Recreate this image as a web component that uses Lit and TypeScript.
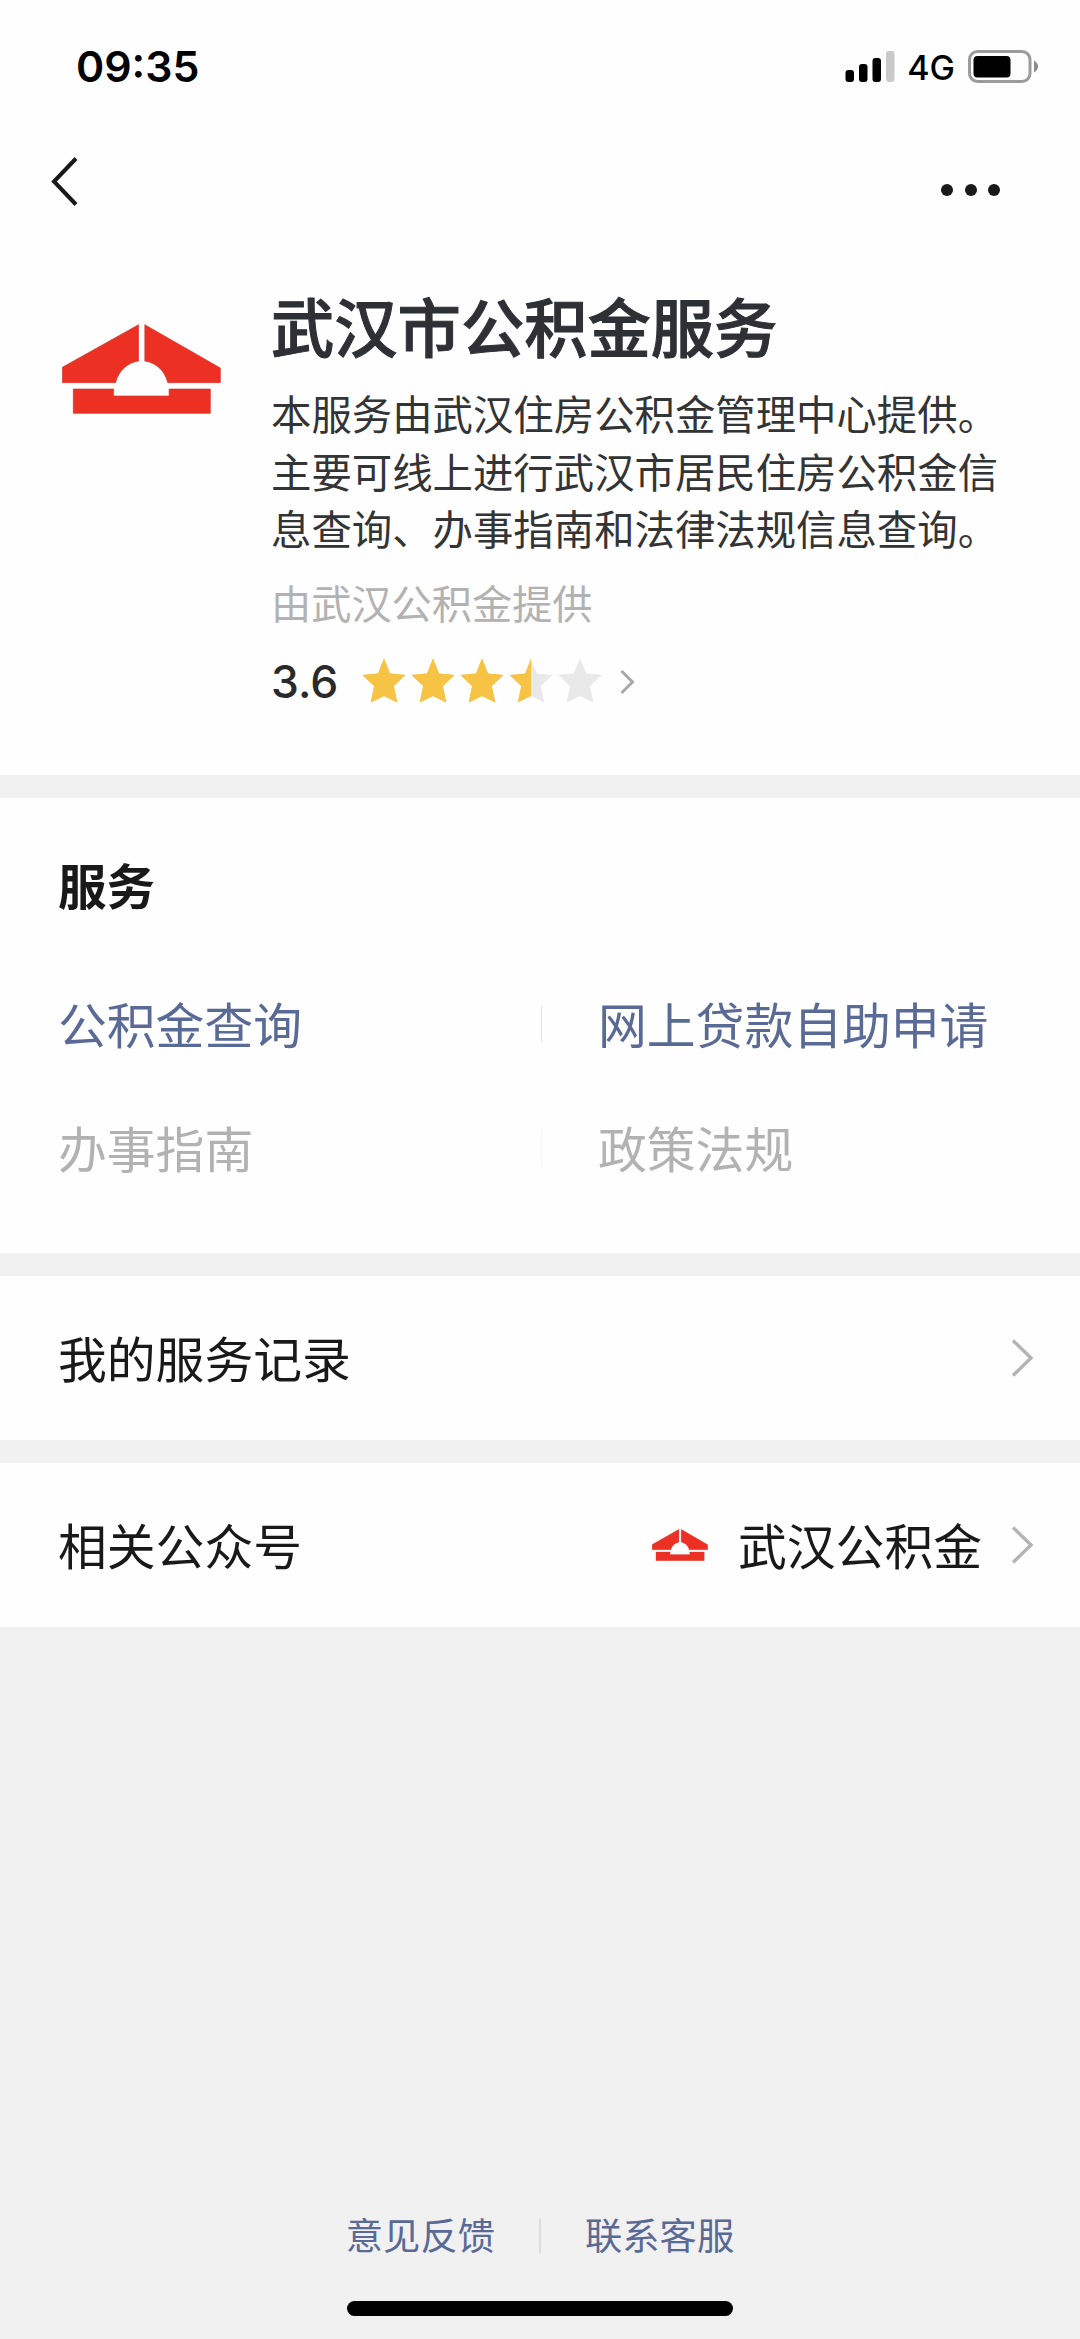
import { LitElement, html, css } from "lit";
import { customElement, property } from "lit/decorators.js";

@customElement("fund-logo")
class FundLogo extends LitElement {
  static styles = css`
    :host { display: block; }
    .mark { display: block; width: 100%; height: 100%; }
    .shape { fill: #ec3023; stroke: #cb3a30; stroke-width: 2; }
  `;
  render() {
    return html`<svg class="mark" viewBox="65 102 478 270" preserveAspectRatio="none">
      <path class="shape" d="M66 232L295 104V213C260 219 235 243 226 278H66Z" />
      <path class="shape" d="M314 104L541 234V278H383C374 243 350 219 314 213Z" />
      <path class="shape" d="M99 297H220V318H387V297H511V370H99Z" />
    </svg>`;
  }
}

@customElement("chevron-icon")
class ChevronIcon extends LitElement {
  @property({ type: Boolean }) small = false;
  static styles = css`
    :host { display: block; }
    .icon { display: block; fill: none; stroke: #b4b4b4; stroke-width: 3.4; }
    .tiny { stroke: #a8a8a8; stroke-width: 3; }
  `;
  render() {
    return this.small
      ? html`<svg class="icon tiny" width="15" height="26" viewBox="0 0 15 26"><path d="M1.5 2L12.5 13L1.5 24" /></svg>`
      : html`<svg class="icon" width="24" height="40" viewBox="0 0 24 40"><path d="M3 2.5L21 20L3 37.5" /></svg>`;
  }
}

@customElement("star-rating")
class StarRating extends LitElement {
  @property({ type: Number }) value = 0;
  static styles = css`
    :host { display: block; }
    .stars { display: flex; gap: 5px; }
    .star { display: block; width: 44px; height: 46px; }
    .off { fill: #e9e9e9; }
    .on { fill: #f6c344; }
    .half { clip-path: inset(0 50% 0 0); }
  `;
  render() {
    const shape = "M22 1.5L28 16.5L43.5 18L31.8 29L35.3 45.6L22 39L8.7 45.6L12.2 29L.5 18L16 16.5Z";
    return html`<div class="stars">
      ${[0, 1, 2, 3, 4].map((i) => {
        const part = Math.round((this.value - i) * 2) / 2;
        return html`<svg class="star" viewBox="0 0 44 46">
          <path class=${part >= 1 ? "on" : "off"} d=${shape} />
          <path class=${part === 0.5 ? "on half" : part >= 1 ? "on" : "off"} d=${shape} />
        </svg>`;
      })}
    </div>`;
  }
}

@customElement("app-root")
class AppRoot extends LitElement {
  static styles = css`
    :host {
      display: block;
      font-family: "Noto Sans CJK SC", sans-serif;
      color: #191919;
    }
    .page {
      display: flex;
      flex-direction: column;
      box-sizing: border-box;
      width: 1080px;
      height: 2339px;
      background: #f1f1f1;
      overflow: hidden;
      white-space: nowrap;
    }
    .panel { background: #fefefe; box-sizing: border-box; }
    .top { height: 775px; }
    .status {
      display: flex;
      align-items: center;
      justify-content: space-between;
      height: 132px;
      box-sizing: border-box;
      padding: 0 41px 0 76px;
      font-family: Inter, sans-serif;
      color: #000;
    }
    .time { font-size: 42.8px; font-weight: 600; line-height: 60px; padding-top: 1px; }
    .signals { display: flex; align-items: center; }
    .net { font-size: 34px; font-weight: 500; line-height: 44px; margin: 4px 13px 0 11px; }
    .glyph { display: block; }
    .nav {
      display: flex;
      align-items: center;
      justify-content: space-between;
      height: 100px;
      box-sizing: border-box;
      padding: 0 80px 0 50px;
    }
    .back { display: block; fill: none; stroke: #191919; stroke-width: 4; }
    .more { display: flex; gap: 11.5px; padding-top: 16px; }
    .dot { width: 12px; height: 12px; border-radius: 50%; background: #191919; }
    .intro { display: flex; padding: 53px 0 0 62px; }
    .brand { width: 159px; height: 90px; margin: 39px 50px 0 0; flex: none; }
    .title { font-size: 63.3px; font-weight: 500; line-height: 80px; color: #2f3036; -webkit-text-stroke: 1px #2f3036; }
    .about { margin-top: 19px; font-size: 40.4px; line-height: 57.5px; color: #333436; }
    .by { margin-top: 16px; font-size: 40.2px; line-height: 57px; color: #b2b2b2; }
    .score { display: flex; align-items: center; height: 50px; margin-top: 25px; }
    .value { font-family: Inter, sans-serif; font-size: 44.5px; font-weight: 500; line-height: 50px; color: #2a2a2a; margin: 4px 24px 0 0; width: 67px; }
    .open { margin: 4px 0 0 18px; }
    .services { margin-top: 23px; height: 455px; padding: 51px 58px 0; }
    .heading { font-size: 48.5px; font-weight: 700; line-height: 70px; }
    .grid { display: grid; grid-template-columns: 484px 1fr; row-gap: 54px; margin-top: 69px; }
    .cell { font-size: 48.8px; line-height: 70px; color: #b2b2b2; display: flex; align-items: center; justify-content: space-between; }
    .cell.live { color: #5a6a96; }
    .rule { width: 1.5px; height: 36px; margin-top: 2px; background: #f7f7f7; }
    .live .rule { background: #e2e2e2; }
    .right { padding-left: 56px; }
    .row {
      display: flex;
      align-items: center;
      height: 164px;
      margin-top: 23px;
      padding: 0 46px 0 58px;
      font-size: 48.8px;
      line-height: 70px;
    }
    .label { flex: 1; margin-top: -3px; }
    .account { margin-top: -3px; }
    .mini { width: 56px; height: 32px; margin-right: 30px; }
    .go { margin-left: 28px; }
    .footer { display: flex; justify-content: center; align-items: center; margin-top: auto; gap: 44px; font-size: 37.3px; line-height: 52px; color: #5a6a96; }
    .sep { width: 2px; height: 34px; margin-top: 3px; background: #dcdcdc; }
    .home { width: 386px; height: 15px; border-radius: 8px; background: #000; margin: 41px auto 23px; }
  `;

  private cell(text: string, live: boolean, right = false) {
    return html`<div class="cell ${live ? "live" : ""} ${right ? "right" : ""}">
      <span>${text}</span>${right ? "" : html`<i class="rule"></i>`}
    </div>`;
  }

  render() {
    return html`<div class="page">
      <header class="panel top">
        <div class="status">
          <span class="time">09:35</span>
          <div class="signals">
            <svg class="glyph" width="51" height="32" viewBox="0 0 51 32">
              <rect x="0.5" y="20" width="8.5" height="12" rx="3" />
              <rect x="14" y="14" width="8.5" height="18" rx="3" />
              <rect x="27.5" y="8" width="8.5" height="24" rx="3" />
              <rect x="41" y="1" width="8.5" height="31" rx="3" fill="#c9c9c9" />
            </svg>
            <span class="net">4G</span>
            <svg class="glyph" width="71" height="33" viewBox="0 0 71 33">
              <rect x="1.5" y="1.5" width="60.5" height="30" rx="8" fill="none" stroke="#9b9b9b" stroke-width="3" />
              <rect x="5.5" y="6" width="37" height="21.5" rx="4" />
              <path d="M66 10.5Q70 13 70 16.5Q70 20 66 22.5Z" fill="#8c8c8c" />
            </svg>
          </div>
        </div>
        <div class="nav">
          <svg class="back" width="30" height="52" viewBox="0 0 30 52"><path d="M26 2.5L4 25.5L26 48.5" /></svg>
          <div class="more"><i class="dot"></i><i class="dot"></i><i class="dot"></i></div>
        </div>
        <div class="intro">
          <fund-logo class="brand"></fund-logo>
          <div>
            <div class="title">武汉市公积金服务</div>
            <div class="about">本服务由武汉住房公积金管理中心提供。<br />主要可线上进行武汉市居民住房公积金信<br />息查询、办事指南和法律法规信息查询。</div>
            <div class="by">由武汉公积金提供</div>
            <div class="score">
              <span class="value">3.6</span>
              <star-rating .value=${3.6}></star-rating>
              <chevron-icon class="open" small></chevron-icon>
            </div>
          </div>
        </div>
      </header>
      <section class="panel services">
        <div class="heading">服务</div>
        <div class="grid">
          ${this.cell("公积金查询", true)}${this.cell("网上贷款自助申请", true, true)}
          ${this.cell("办事指南", false)}${this.cell("政策法规", false, true)}
        </div>
      </section>
      <section class="panel row">
        <span class="label">我的服务记录</span>
        <chevron-icon class="go"></chevron-icon>
      </section>
      <section class="panel row">
        <span class="label">相关公众号</span>
        <fund-logo class="mini"></fund-logo>
        <span class="account">武汉公积金</span>
        <chevron-icon class="go"></chevron-icon>
      </section>
      <footer class="footer"><span>意见反馈</span><i class="sep"></i><span>联系客服</span></footer>
      <div class="home"></div>
    </div>`;
  }
}
